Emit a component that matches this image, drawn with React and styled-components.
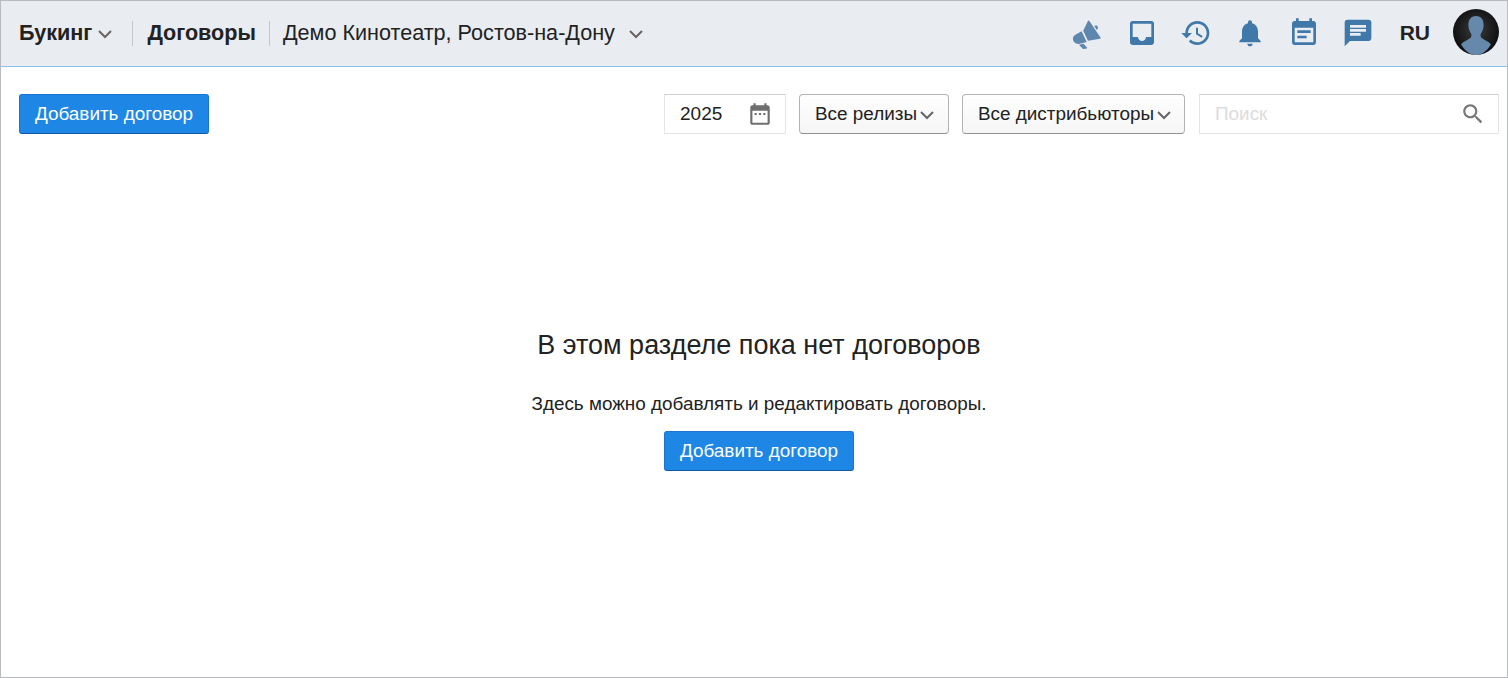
import React from 'react';
import styled, { createGlobalStyle } from 'styled-components';

const GlobalStyle = createGlobalStyle`
    html, body {
        margin: 0;
        padding: 0;
        background: #fff;
    }
    body {
        font-family: "Liberation Sans", Arial, sans-serif;
        color: #222;
    }
`;

const Chevron = () => (
    <ChevronSvg width="16" height="16" viewBox="0 0 16 16">
        <path d="M2 5 8 11l6-6" fill="none" stroke="currentColor" strokeWidth="2" />
    </ChevronSvg>
);

const Icon = ({ d, size = 32, color = '#3f78a9' }) => (
    <svg width={size} height={size} viewBox="0 0 24 24" fill={color}>
        <path d={d} />
    </svg>
);

const icons = {
    inbox: 'M19 3H4.990c-1.110 0-1.980.890-1.980 2L3 19c0 1.100.880 2 1.990 2H19c1.100 0 2-.900 2-2V5c0-1.110-.900-2-2-2zm0 12h-4c0 1.660-1.350 3-3 3s-3-1.340-3-3H4.990V5H19v10z',
    history: 'M13 3c-4.970 0-9 4.030-9 9H1l3.890 3.890.070.140L9 12H6c0-3.870 3.130-7 7-7s7 3.130 7 7-3.130 7-7 7c-1.930 0-3.680-.790-4.940-2.060l-1.420 1.420C8.270 19.990 10.510 21 13 21c4.970 0 9-4.030 9-9s-4.030-9-9-9zm-1 5v5l4.280 2.540.720-1.210-3.500-2.080V8H12z',
    bell: 'M12 22c1.100 0 2-.900 2-2h-4c0 1.100.890 2 2 2zm6-6v-5c0-3.070-1.640-5.640-4.500-6.320V4c0-.830-.670-1.500-1.500-1.500s-1.500.670-1.500 1.500v.680C7.630 5.360 6 7.920 6 11v5l-2 2v1h16v-1l-2-2z',
    event: 'M17 10H7v2h10v-2zm2-7h-1V1h-2v2H8V1H6v2H5c-1.110 0-1.990.900-1.990 2L3 19c0 1.100.890 2 2 2h14c1.100 0 2-.900 2-2V5c0-1.100-.900-2-2-2zm0 16H5V8h14v11zm-5-5H7v2h7v-2z',
    chat: 'M20 2H4c-1.100 0-1.990.900-1.990 2L2 22l4-4h14c1.100 0 2-.900 2-2V4c0-1.100-.900-2-2-2zM6 9h12v2H6V9zm8 5H6v-2h8v2zm4-6H6V6h12v2z',
    dateRange: 'M9 11H7v2h2v-2zm4 0h-2v2h2v-2zm4 0h-2v2h2v-2zm2-7h-1V2h-2v2H8V2H6v2H5c-1.110 0-1.990.900-1.990 2L3 20c0 1.100.890 2 2 2h14c1.100 0 2-.900 2-2V6c0-1.100-.900-2-2-2zm0 16H5V9h14v11z',
    search: 'M15.500 14h-.790l-.280-.270C15.410 12.590 16 11.110 16 9.500 16 5.910 13.090 3 9.500 3S3 5.910 3 9.500 5.910 16 9.500 16c1.610 0 3.090-.590 4.230-1.570l.270.280v.790l5 4.990L20.490 19l-4.990-5zm-6 0C7.010 14 5 11.990 5 9.500S7.010 5 9.500 5 14 7.010 14 9.500 11.990 14 9.500 14z',
};

const Megaphone = () => (
    <MegaphoneSvg width="32" height="32" viewBox="0 -1.500 32 32" fill="#5f86ad">
        <path d="M16.800 2.700c.5-.8 1.200-.8 1.700 0l11 16.400c.4.700.2 1.100-.5 1.200l-12 1.900-4.800-10z" />
        <path d="M10.600 12.800 15.700 23.500l-3.900 1.100c-1.500.4-3.600 1-5.500.7C3.800 25 1.800 22.800 1.900 20.300c.1-2 1.300-3.300 2.900-4.200z" />
        <path d="M8 26.300l4.500-1 3.400 3.600c.5.600.3 1.100-.4 1.200l-2.600.4c-.6.1-1 0-1.400-.4z" />
        <path d="M23.300 7.500c1.300-1 3-.6 3.500.8.400 1.100 0 2.300-1 3.100z" />
    </MegaphoneSvg>
);

const Avatar = () => (
    <AvatarSvg width="46" height="46" viewBox="0 0 46 46">
        <defs>
            <radialGradient id="avatarBg" cx="50%" cy="45%" r="55%">
                <stop offset="0%" stopColor="#3a3a3a" />
                <stop offset="100%" stopColor="#0d0d0d" />
            </radialGradient>
        </defs>
        <circle cx="23" cy="23" r="23" fill="url(#avatarBg)" />
        <path
            d="M23 7c5.300 0 7.800 4 7.600 9.500-.2 3.600-1.300 6-2.700 8.200-.7 1.200-.5 3 .5 4 2.500 2.300 7 3.200 9.600 6.500C33.800 42.300 28.700 46 23 46s-10.800-3.700-15-10.800c2.600-3.300 7.100-4.200 9.600-6.500 1-1 1.200-2.800.5-4-1.400-2.200-2.500-4.600-2.700-8.200C15.200 11 17.700 7 23 7z"
            fill="#6688ab"
        />
    </AvatarSvg>
);

export default function App() {
    return (
        <>
            <GlobalStyle />
            <Page>
                <Header>
                    <Nav>
                        <NavTitle>Букинг</NavTitle>
                        <NavChevron $gap={5}><Chevron /></NavChevron>
                        <Divider $left={19} $right={14} />
                        <NavTitle>Договоры</NavTitle>
                        <Divider $left={13} $right={13} />
                        <CinemaName>Демо Кинотеатр, Ростов-на-Дону</CinemaName>
                        <NavChevron $gap={13}><Chevron /></NavChevron>
                    </Nav>
                    <Actions>
                        <Megaphone />
                        <Icon d={icons.inbox} />
                        <Icon d={icons.history} />
                        <Icon d={icons.bell} />
                        <Icon d={icons.event} />
                        <Icon d={icons.chat} />
                        <Lang>RU</Lang>
                        <Avatar />
                    </Actions>
                </Header>
                <Content>
                    <Toolbar>
                        <PrimaryButton>Добавить договор</PrimaryButton>
                        <Filters>
                            <YearField>
                                2025
                                <Icon d={icons.dateRange} size={26} color="#6f6f6f" />
                            </YearField>
                            <SelectButton $width={150}>
                                Все релизы
                                <Chevron />
                            </SelectButton>
                            <SelectButton $width={223}>
                                Все дистрибьюторы
                                <Chevron />
                            </SelectButton>
                            <SearchField>
                                <SearchInput placeholder="Поиск" />
                                <Icon d={icons.search} size={26} color="#777" />
                            </SearchField>
                        </Filters>
                    </Toolbar>
                    <Empty>
                        <EmptyTitle>В этом разделе пока нет договоров</EmptyTitle>
                        <EmptyText>Здесь можно добавлять и редактировать договоры.</EmptyText>
                        <PrimaryButton>Добавить договор</PrimaryButton>
                    </Empty>
                </Content>
            </Page>
        </>
    );
}

const Page = styled.div`
    box-sizing: border-box;
    height: 678px;
    border: 1px solid #b9bbbe;
    overflow: hidden;
`;

const Header = styled.header`
    box-sizing: border-box;
    height: 66px;
    display: flex;
    align-items: center;
    justify-content: space-between;
    padding: 0 8px 1px 18px;
    background: #e9ecf1;
    border-bottom: 1px solid #8cc0e8;
`;

const Nav = styled.nav`
    display: flex;
    align-items: center;
`;

const NavTitle = styled.span`
    font-size: 21.600px;
    font-weight: 700;
    color: #222;
`;

const ChevronSvg = styled.svg`
    display: block;
    flex: none;
`;

const NavChevron = styled.span`
    margin-left: ${props => props.$gap}px;
    color: #6b6460;
    padding-top: 2px;
`;

const Divider = styled.span`
    width: 1px;
    height: 25px;
    background: #c4c6ca;
    margin-left: ${props => props.$left}px;
    margin-right: ${props => props.$right}px;
`;

const CinemaName = styled.span`
    font-size: 21.600px;
    color: #222;
`;

const Actions = styled.div`
    display: flex;
    align-items: center;
    gap: 22px;
`;

const MegaphoneSvg = styled.svg`
    margin-right: 1px;
`;

const Lang = styled.span`
    margin-left: 3.500px;
    font-size: 21px;
    font-weight: 700;
    color: #222;
`;

const AvatarSvg = styled.svg`
    display: block;
    margin: -2px 0 0 1px;
`;

const Content = styled.main`
    padding: 27px 8px 0 18px;
`;

const Toolbar = styled.div`
    display: flex;
    justify-content: space-between;
    align-items: flex-start;
`;

const Filters = styled.div`
    display: flex;
    gap: 13px;
`;

const PrimaryButton = styled.button`
    box-sizing: border-box;
    height: 40px;
    width: 190px;
    padding: 0;
    font-family: inherit;
    font-size: 18.900px;
    color: #fff;
    background: #1e86e5;
    border: 1px solid #1b75cf;
    border-bottom-color: #1059a8;
    border-radius: 3px;
    cursor: pointer;
`;

const YearField = styled.div`
    box-sizing: border-box;
    width: 122px;
    height: 40px;
    display: flex;
    align-items: center;
    justify-content: space-between;
    padding: 0 12px 0 15px;
    font-size: 19px;
    color: #222;
    border: 1px solid #e6e6e6;
    border-top-color: #cfcfcf;
`;

const SelectButton = styled.button`
    box-sizing: border-box;
    width: ${props => props.$width}px;
    height: 40px;
    display: flex;
    align-items: center;
    gap: 2px;
    padding: 0 0 0 15px;
    font-family: inherit;
    font-size: 18.900px;
    white-space: nowrap;
    color: #222;
    background: linear-gradient(#fefefe, #f6f6f6);
    border: 1px solid #b4b4b4;
    border-bottom-color: #8f8f8f;
    border-radius: 4px;
    cursor: pointer;
    svg {
        color: #666;
        margin-top: 2px;
    }
`;

const SearchField = styled.div`
    box-sizing: border-box;
    width: 300px;
    height: 40px;
    margin-left: 1px;
    display: flex;
    align-items: center;
    padding: 0 12px 0 15px;
    border: 1px solid #e6e6e6;
    border-top-color: #cfcfcf;
`;

const SearchInput = styled.input`
    flex: 1;
    min-width: 0;
    border: none;
    outline: none;
    padding: 0;
    background: transparent;
    font-family: inherit;
    font-size: 18.900px;
    &::placeholder {
        color: #dcdcdc;
        opacity: 1;
    }
`;

const Empty = styled.section`
    margin-top: 194px;
    display: flex;
    flex-direction: column;
    align-items: center;
`;

const EmptyTitle = styled.h2`
    margin: 0;
    font-size: 27px;
    line-height: 34px;
    font-weight: 400;
    color: #222;
`;

const EmptyText = styled.p`
    margin: 30px 0 15px;
    font-size: 18.900px;
    line-height: 24px;
    color: #222;
`;
